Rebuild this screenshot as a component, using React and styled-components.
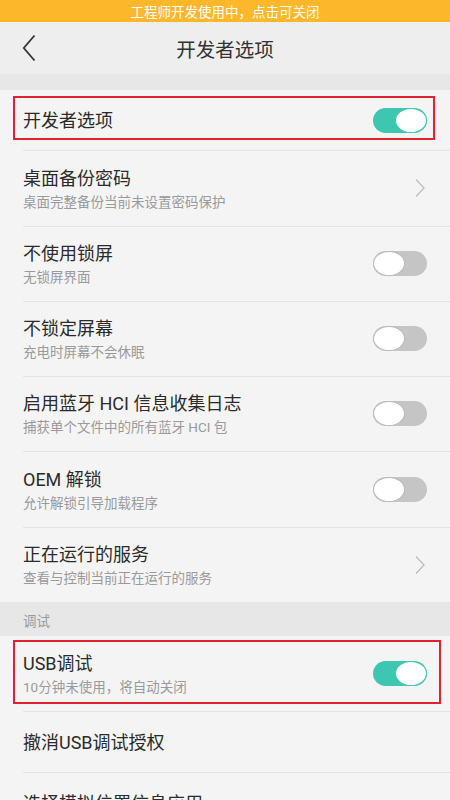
import styled, { createGlobalStyle } from "styled-components";

const GlobalStyle = createGlobalStyle`
  body {
    margin: 0;
    background: #f4f4f4;
    font-family: Roboto, "Noto Sans CJK SC", sans-serif;
  }
  * { box-sizing: border-box; }
`;

const Page = styled.div`
  width: 450px;
  height: 800px;
  overflow: hidden;
  background: #f4f4f4;
`;

const Banner = styled.div`
  height: 22px;
  background: #fcb72a;
  color: #fff;
  font-size: 13.5px;
  display: flex;
  align-items: center;
  justify-content: center;
`;

const Header = styled.div`
  height: 52px;
  background: #eeeeee;
  display: grid;
  grid-template-columns: 60px 1fr 60px;
  align-items: center;
`;

const Back = styled.div`
  display: flex;
  align-items: center;
  padding-left: 22px;
  height: 100%;
`;

const Title = styled.div`
  text-align: center;
  font-size: 19.5px;
  color: #333;
`;

const Band = styled.div`
  height: 16px;
  background: #e7e7e7;
`;

const Section = styled.div`
  height: 34px;
  background: #e7e7e7;
  color: #9a9a9a;
  font-size: 13.5px;
  display: flex;
  align-items: center;
  padding: 2px 23px 0;
`;

const Row = styled.div`
  position: relative;
  height: ${(p) => p.$h}px;
  display: flex;
  align-items: center;
  padding: 0 23px;
  &:not(:first-child)::before {
    content: "";
    position: absolute;
    top: 0;
    left: 23px;
    right: 0;
    height: 1px;
    background: #e4e4e4;
  }
`;

const Texts = styled.div`
  flex: 1;
  display: flex;
  flex-direction: column;
  padding-top: 2px;
`;

const Label = styled.div`
  font-size: 18px;
  line-height: 24px;
  color: #2b2b2b;
`;

const Sub = styled.div`
  font-size: 13.5px;
  line-height: 20px;
  margin-top: 1px;
  color: #9a9a9a;
`;

const Track = styled.span`
  position: relative;
  width: 54px;
  height: 25px;
  border-radius: 13px;
  background: ${(p) => (p.$on ? "#3dc6b0" : "#c5c5c5")};
  display: flex;
  justify-content: ${(p) => (p.$on ? "flex-end" : "flex-start")};
`;

const Knob = styled.span`
  width: 32px;
  height: 25px;
  border-radius: 50%;
  background: #fff;
  border: 1px solid ${(p) => (p.$on ? "#3dc6b0" : "#b8b8b8")};
`;

const Mark = styled.div`
  position: absolute;
  top: ${(p) => p.$top}px;
  left: 13px;
  width: ${(p) => p.$w}px;
  height: ${(p) => p.$h}px;
  border: 2px solid #e1212e;
  pointer-events: none;
`;

const Chevron = () => (
  <svg width="12" height="20" viewBox="0 0 12 20" style={{ marginRight: 1 }}>
    <path d="M2 1.5 L10 10 L2 18.5" fill="none" stroke="#bdbdbd" strokeWidth="1.3" />
  </svg>
);

const Toggle = ({ on }) => (
  <Track $on={on}>
    <Knob $on={on} />
  </Track>
);

const Item = ({ h, label, sub, control, mark }) => (
  <Row $h={h}>
    <Texts>
      <Label>{label}</Label>
      {sub && <Sub>{sub}</Sub>}
    </Texts>
    {control === "chevron" && <Chevron />}
    {control === "on" && <Toggle on />}
    {control === "off" && <Toggle />}
    {mark && <Mark $top={mark.top} $w={mark.w} $h={mark.h} />}
  </Row>
);

const App = () => {
  return (
    <Page>
      <GlobalStyle />
      <Banner>工程师开发使用中，点击可关闭</Banner>
      <Header>
        <Back>
          <svg width="14" height="28" viewBox="0 0 14 28">
            <path d="M12.5 1.5 L1.8 14 L12.5 26.5" fill="none" stroke="#333" strokeWidth="1.8" />
          </svg>
        </Back>
        <Title>开发者选项</Title>
        <div />
      </Header>
      <Band />
      <div>
        <Item h={60} label="开发者选项" control="on" mark={{ top: 6, w: 422, h: 44 }} />
        <Item h={76} label="桌面备份密码" sub="桌面完整备份当前未设置密码保护" control="chevron" />
        <Item h={75} label="不使用锁屏" sub="无锁屏界面" control="off" />
        <Item h={75} label="不锁定屏幕" sub="充电时屏幕不会休眠" control="off" />
        <Item h={75} label="启用蓝牙 HCI 信息收集日志" sub="捕获单个文件中的所有蓝牙 HCI 包" control="off" />
        <Item h={76} label="OEM 解锁" sub="允许解锁引导加载程序" control="off" />
        <Item h={75} label="正在运行的服务" sub="查看与控制当前正在运行的服务" control="chevron" />
      </div>
      <Section>调试</Section>
      <div>
        <Item h={75} label="USB调试" sub="10分钟未使用，将自动关闭" control="on" mark={{ top: 4, w: 428, h: 64 }} />
        <Item h={61} label="撤消USB调试授权" />
        <Item h={61} label="选择模拟位置信息应用" />
      </div>
    </Page>
  );
};

export default App;
